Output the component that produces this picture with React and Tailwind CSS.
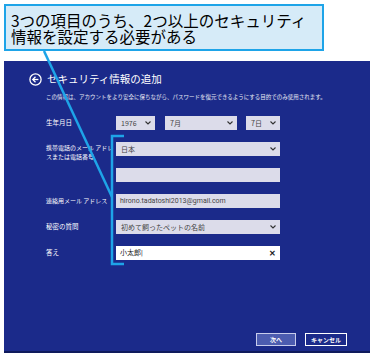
const jp = "font-['Noto_Sans_CJK_JP','Noto_Sans',sans-serif]";

function Chevron() {
  return (
    <svg width="6" height="4" viewBox="0 0 6 4" className="shrink-0">
      <polyline points="0.5,0.5 3,3 5.5,0.5" fill="none" stroke="#333" strokeWidth="1.1" />
    </svg>
  );
}

function Select({ value, className = "" }) {
  return (
    <div className={`h-[14px] bg-[#dcdcea] flex items-center justify-between pl-[5px] pr-[4px] text-[7px] text-[#444] ${className}`}>
      <span>{value}</span>
      <Chevron />
    </div>
  );
}

function Input({ value = "", white = false, clear = false }) {
  return (
    <div className={`h-[14px] w-[164px] flex items-center justify-between pl-[4px] pr-[4px] text-[7px] ${white ? "bg-white text-[#222]" : "bg-[#dcdcea] text-[#444]"}`}>
      <span className="font-['Roboto','Noto_Sans_CJK_JP',sans-serif]">{value}</span>
      {clear && <span className="text-[8px] leading-none text-[#222] font-bold">✕</span>}
    </div>
  );
}

function Row({ label, children, top = false }) {
  return (
    <div className={`flex h-[14px] ${top ? "items-start" : "items-center"}`}>
      <div className={`w-[70px] shrink-0 text-[6.5px] text-white whitespace-nowrap ${top ? "leading-[9px] mt-[1px]" : ""}`}>
        {label}
      </div>
      {children}
    </div>
  );
}

export default function App() {
  return (
    <div className={`w-[374px] h-[360px] bg-white relative overflow-hidden ${jp}`}>

      {/* CALLOUT */}
      <div className="ml-[4px] mt-[4px] w-[320px] h-[47px] border-2 border-[#1ea4e8] bg-[#d6ebf8] pl-[5px] pt-[6px] text-[15.5px] leading-[16px] text-black whitespace-nowrap">
        <div>3つの項目のうち、2つ以上のセキュリティ</div>
        <div>情報を設定する必要がある</div>
      </div>

      {/* PANEL */}
      <div className="ml-[4px] mt-[10px] w-[366px] h-[292px] bg-[#1b2a8a] border-b-2 border-[#0f1a5c] pl-[25px] pt-[12px] flex flex-col">
        <div className="flex items-center gap-[5px] h-[13px]">
          <svg width="13" height="13" viewBox="0 0 13 13">
            <circle cx="6.5" cy="6.5" r="5.6" fill="none" stroke="white" strokeWidth="1.3" />
            <polyline points="6.5,3.8 3.8,6.5 6.5,9.2" fill="none" stroke="white" strokeWidth="1.3" />
            <line x1="3.9" y1="6.5" x2="9.4" y2="6.5" stroke="white" strokeWidth="1.3" />
          </svg>
          <span className="text-[10.5px] text-white leading-none">セキュリティ情報の追加</span>
        </div>

        <div className="ml-[17px] mt-[8px] text-[5.5px] leading-[6px] text-white/90 whitespace-nowrap">
          この情報は、アカウントをより安全に保ちながら、パスワードを復元できるようにする目的でのみ使用されます。
        </div>

        <div className="ml-[17px] mt-[16px] flex flex-col gap-[12px]">
          <Row label="生年月日">
            <Select value="1976" className="w-[39px]" />
            <Select value="7月" className="w-[72px] ml-[10px]" />
            <Select value="7日" className="w-[34px] ml-[9px]" />
          </Row>
          <Row
            label={
              <>
                <div className="text-[6px]">携帯電話のメール アドレ</div>
                <div className="text-[6px]">スまたは電話番号</div>
              </>
            }
            top
          >
            <Select value="日本" className="w-[164px]" />
          </Row>
          <Row label="">
            <Input />
          </Row>
          <Row label={<span className="text-[6px]">連絡用メール アドレス</span>}>
            <Input value="hirono.tadatoshi2013@gmail.com" />
          </Row>
          <Row label="秘密の質問">
            <Select value="初めて飼ったペットの名前" className="w-[164px]" />
          </Row>
          <Row label="答え">
            <Input value="小太郎|" white clear />
          </Row>
        </div>

        <div className="mt-auto mb-[5px] mr-[23px] flex justify-end gap-[9px]">
          <div className="w-[40px] h-[13px] bg-[#4c5cb0] border border-[#c8ccec] flex items-center justify-center text-[6px] font-bold text-white">
            次へ
          </div>
          <div className="w-[42px] h-[13px] border border-white flex items-center justify-center text-[6px] font-bold text-white">
            キャンセル
          </div>
        </div>
      </div>

      {/* CALLOUT POINTER + BRACKET */}
      <svg className="absolute left-0 top-0 pointer-events-none" width="374" height="360">
        <line x1="44" y1="51" x2="112" y2="197" stroke="#1ea4e8" strokeWidth="2.5" />
        <polyline points="124,136 112,136 112,264 124,264" fill="none" stroke="#1ea4e8" strokeWidth="2.5" />
      </svg>
    </div>
  );
}
